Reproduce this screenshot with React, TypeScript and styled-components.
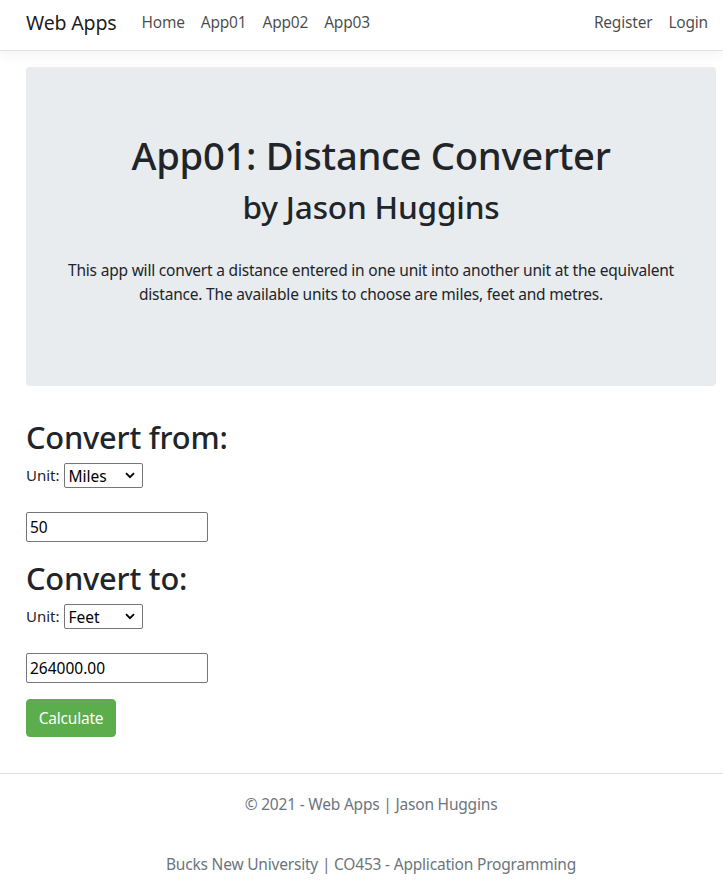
import React from "react";
import styled, { createGlobalStyle } from "styled-components";

const Global = createGlobalStyle`
  html, body { margin: 0; padding: 0; background: #fff; }
  body {
    font-family: "Noto Sans", "Open Sans", sans-serif;
    font-size: 16px;
    line-height: 1.5;
    color: #212529;
  }
  * { box-sizing: border-box; }
`;

const Nav = styled.nav`
  height: 51px;
  display: flex;
  align-items: center;
  padding: 0 7px 5px 26px;
  border-bottom: 1px solid #dee2e6;
  box-shadow: 0 .25rem .75rem rgba(0,0,0,.05);
`;

const Brand = styled.a`
  font-size: 19.6px;
  color: rgba(0,0,0,.9);
  margin-right: 17px;
  text-decoration: none;
  letter-spacing: -0.2px;
`;

const NavList = styled.div<{ $right?: boolean }>`
  display: flex;
  margin-left: ${(p) => (p.$right ? "auto" : "0")};
`;

const NavLink = styled.a`
  font-size: 15.5px;
  color: rgba(0,0,0,.72);
  padding: 0 8px;
  text-decoration: none;
  letter-spacing: -0.2px;
`;

const Main = styled.main`
  padding: 16px 7px 0 26px;
`;

const Jumbo = styled.section`
  background: #e9ecef;
  border-radius: 4px;
  padding: 64px 32px;
  margin-bottom: 32px;
  text-align: center;
`;

const Title = styled.h1`
  margin: 0 0 8px;
  font-size: 38.2px;
  font-weight: 500;
  line-height: 48px;
  letter-spacing: -0.3px;
`;

const Subtitle = styled.h2`
  margin: 0;
  font-size: 31.6px;
  font-weight: 500;
  line-height: 40px;
  letter-spacing: -0.2px;
`;

const Lead = styled.p`
  margin: 31px 0 16px;
  font-size: 15.5px;
  line-height: 24px;
  letter-spacing: -0.2px;
`;

const SectionTitle = styled.h2<{ $top?: number }>`
  margin: ${(p) => p.$top ?? 0}px 0 7px;
  font-size: 30.8px;
  font-weight: 500;
  line-height: 38px;
  letter-spacing: -0.2px;
`;

const UnitRow = styled.div`
  display: flex;
  align-items: center;
  height: 25px;
  margin-bottom: 24px;
  font-size: 15px;
`;

const SelectWrap = styled.span`
  position: relative;
  display: inline-flex;
  margin-left: 4px;
`;

const Select = styled.select`
  appearance: none;
  width: 79px;
  height: 25px;
  border: 1px solid #767676;
  border-radius: 2px;
  background: #fff;
  font-family: inherit;
  font-size: 15.5px;
  color: #000;
  padding: 0 0 0 4px;
`;

const Chevron = styled.svg`
  position: absolute;
  right: 8px;
  top: 9px;
  pointer-events: none;
`;

const TextInput = styled.input`
  display: block;
  width: 182px;
  height: 30px;
  border: 1px solid #767676;
  border-radius: 2px;
  padding: 0 3px;
  font-family: inherit;
  font-size: 15.5px;
  color: #000;
`;

const Button = styled.button`
  margin-top: 16px;
  background: #5cad4c;
  color: #fff;
  border: 1px solid #5cad4c;
  border-radius: 4px;
  height: 38px;
  width: 90px;
  font-family: inherit;
  font-size: 15.5px;
  letter-spacing: -0.2px;
  padding: 0;
`;

const Footer = styled.footer`
  margin-top: 36px;
  border-top: 1px solid #dee2e6;
  padding: 0 7px 0 26px;
  text-align: center;
  color: #6c757d;
  font-size: 15.5px;
  letter-spacing: -0.2px;
`;

const FooterLine = styled.div<{ $pt: number }>`
  padding-top: ${(p) => p.$pt}px;
  line-height: 24px;
`;

function UnitSelect({ value }: { value: string }) {
  return (
    <UnitRow>
      Unit:
      <SelectWrap>
        <Select defaultValue={value}>
          <option>Miles</option>
          <option>Feet</option>
          <option>Metres</option>
        </Select>
        <Chevron width="10" height="7" viewBox="0 0 10 7">
          <path d="M1 1.2 L5 5.2 L9 1.2" fill="none" stroke="#000" strokeWidth="1.8" />
        </Chevron>
      </SelectWrap>
    </UnitRow>
  );
}

export default function App() {
  return (
    <>
      <Global />
      <Nav>
        <Brand>Web Apps</Brand>
        <NavList>
          <NavLink>Home</NavLink>
          <NavLink>App01</NavLink>
          <NavLink>App02</NavLink>
          <NavLink>App03</NavLink>
        </NavList>
        <NavList $right>
          <NavLink>Register</NavLink>
          <NavLink>Login</NavLink>
        </NavList>
      </Nav>
      <Main>
        <Jumbo>
          <Title>App01: Distance Converter</Title>
          <Subtitle>by Jason Huggins</Subtitle>
          <Lead>
            This app will convert a distance entered in one unit into another unit at the equivalent
            distance. The available units to choose are miles, feet and metres.
          </Lead>
        </Jumbo>
        <SectionTitle>Convert from:</SectionTitle>
        <UnitSelect value="Miles" />
        <TextInput defaultValue="50" />
        <SectionTitle $top={17}>Convert to:</SectionTitle>
        <UnitSelect value="Feet" />
        <TextInput defaultValue="264000.00" />
        <Button>Calculate</Button>
      </Main>
      <Footer>
        <FooterLine $pt={18}>© 2021 - Web Apps | Jason Huggins</FooterLine>
        <FooterLine $pt={36}>Bucks New University | CO453 - Application Programming</FooterLine>
      </Footer>
    </>
  );
}
